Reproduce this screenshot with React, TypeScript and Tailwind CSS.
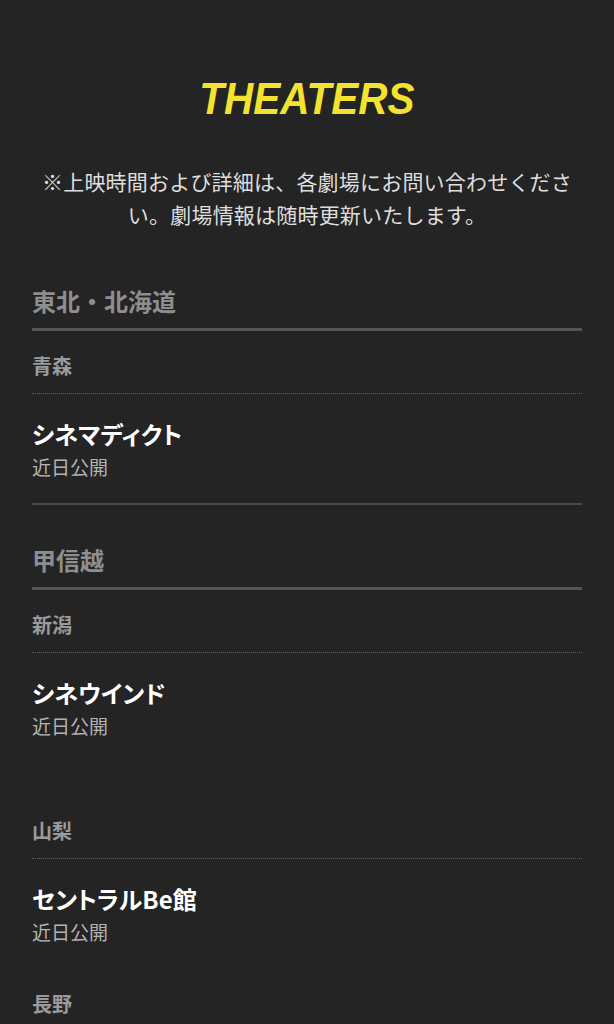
const regions = [
  {
    name: "東北・北海道",
    prefs: [
      { name: "青森", theaters: [{ name: "シネマディクト", status: "近日公開" }] },
    ],
  },
  {
    name: "甲信越",
    prefs: [
      { name: "新潟", theaters: [{ name: "シネウインド", status: "近日公開", note: "\u00a0" }] },
      { name: "山梨", theaters: [{ name: "セントラルBe館", status: "近日公開" }] },
      { name: "長野", theaters: [{ name: "長野相生座・ロキシー", status: "近日公開" }] },
    ],
  },
];

const jp = "font-['Hiragino_Sans','Noto_Sans_CJK_JP',sans-serif]";

export default function App() {
  return (
    <main className={`min-h-screen bg-[#242424] px-8 pb-20 ${jp}`}>
      {/* TITLE */}
      <h1 className="pt-[77px] text-center text-[44px] leading-none font-bold italic text-[#f3e22f] font-['Liberation_Sans',Arial,sans-serif]">
        <span className="inline-block scale-x-[0.92]">THEATERS</span>
      </h1>

      <p className="mt-[44px] text-center text-[21px] leading-[33px] tracking-[0.2px] text-[#dedede]">
        ※上映時間および詳細は、各劇場にお問い合わせください。劇場情報は随時更新いたします。
      </p>

      {/* LIST */}
      {regions.map((region, ri) => (
        <section key={region.name} className={ri === 0 ? "mt-[50px]" : "mt-[35px]"}>
          <h2 className="pb-2 border-b-[3px] border-[#555555] text-[24px] leading-[39px] font-bold text-[#8e8e8e]">
            {region.name}
          </h2>

          {region.prefs.map((pref, pi) => (
            <div key={pref.name} className={pi === 0 ? "mt-5" : "mt-[43px]"}>
              <h3 className="pb-3 border-b border-dotted border-[#5e5e5e] text-[20px] leading-[30px] font-bold text-[#9a9a9a]">
                {pref.name}
              </h3>

              <ul>
                {pref.theaters.map((t) => (
                  <li key={t.name} className="pt-[23px]">
                    <p className="text-[24px] leading-[34px] font-bold text-white [font-feature-settings:'palt']">
                      {t.name}
                    </p>
                    <p className="mt-[2px] text-[19px] leading-[28px] text-[#b3b3b3]">
                      {t.status}
                    </p>
                    {t.note && <p className="text-[19px] leading-[33px]">{t.note}</p>}
                  </li>
                ))}
              </ul>
            </div>
          ))}

          <div className="mt-[22px] h-[2px] bg-[#4a4a4a]" />
        </section>
      ))}
    </main>
  );
}
